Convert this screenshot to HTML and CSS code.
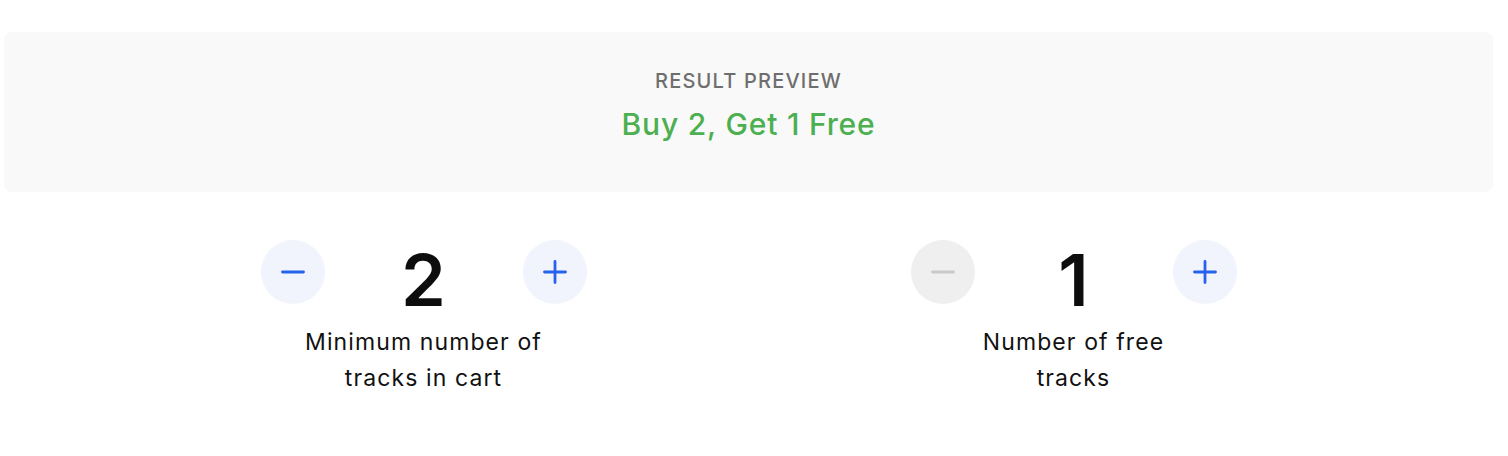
FILE: index.html
```html
<!DOCTYPE html>
<html>
<head>
<meta charset="utf-8"/>
<link rel="stylesheet" href="styles.css">
</head>
<body>
<div class="page">
  <div class="preview">
    <div class="preview-title">RESULT PREVIEW</div>
    <div class="preview-result">Buy 2, Get 1 Free</div>
  </div>

  <div class="counters">
    <div class="counter">
      <div class="stepper">
        <button class="step-btn" title="Decrease">
          <svg width="24" height="24" viewBox="0 0 24 24"><path d="M1.5 12h21" stroke="currentColor" stroke-width="2.8" stroke-linecap="round"/></svg>
        </button>
        <div class="value">2</div>
        <button class="step-btn" title="Increase">
          <svg width="24" height="24" viewBox="0 0 24 24"><path d="M1.5 12h21M12 1.5v21" stroke="currentColor" stroke-width="2.8" stroke-linecap="round"/></svg>
        </button>
      </div>
      <div class="label">Minimum number of tracks in cart</div>
    </div>

    <div class="counter">
      <div class="stepper">
        <button class="step-btn disabled" title="Decrease" disabled>
          <svg width="24" height="24" viewBox="0 0 24 24"><path d="M1.5 12h21" stroke="currentColor" stroke-width="2.8" stroke-linecap="round"/></svg>
        </button>
        <div class="value">1</div>
        <button class="step-btn" title="Increase">
          <svg width="24" height="24" viewBox="0 0 24 24"><path d="M1.5 12h21M12 1.5v21" stroke="currentColor" stroke-width="2.8" stroke-linecap="round"/></svg>
        </button>
      </div>
      <div class="label">Number of free tracks</div>
    </div>
  </div>
</div>
</body>
</html>
```

FILE: styles.css
```css
body {
  margin: 0;
  background: #fff;
  font-family: Inter, "Noto Sans", sans-serif;
  color: #111;
}

.page {
  padding: 32px 15px 0 4px;
}

.preview {
  box-sizing: border-box;
  height: 160px;
  padding-top: 37px;
  background: #f9f9f9;
  border-radius: 8px;
  display: flex;
  flex-direction: column;
  align-items: center;
  gap: 13px;
}

.preview-title {
  font-size: 20px;
  line-height: 24px;
  letter-spacing: 1.2px;
  color: #6e6e6e;
  font-weight: 500;
}

.preview-result {
  font-size: 30px;
  line-height: 36px;
  letter-spacing: 0.8px;
  color: #4caf50;
  font-weight: 500;
}

.counters {
  max-width: 1300px;
  margin: 48px auto 0;
  display: grid;
  grid-template-columns: 1fr 1fr;
}

.counter {
  display: flex;
  flex-direction: column;
  align-items: center;
}

.stepper {
  display: grid;
  grid-template-columns: 64px 198px 64px;
  align-items: start;
}

.step-btn {
  width: 64px;
  height: 64px;
  border: none;
  border-radius: 50%;
  background: #f1f4fd;
  color: #2563eb;
  display: flex;
  align-items: center;
  justify-content: center;
  padding: 0;
  cursor: pointer;
}

.step-btn.disabled {
  background: #efefef;
  color: #c9c9c9;
  cursor: default;
}

.value {
  text-align: center;
  font-size: 72px;
  line-height: 80px;
  font-weight: 600;
  color: #0d0d0d;
}

.label {
  max-width: 250px;
  text-align: center;
  font-size: 23px;
  line-height: 36px;
  letter-spacing: 1.1px;
  color: #111;
  margin-top: 4px;
}
```
